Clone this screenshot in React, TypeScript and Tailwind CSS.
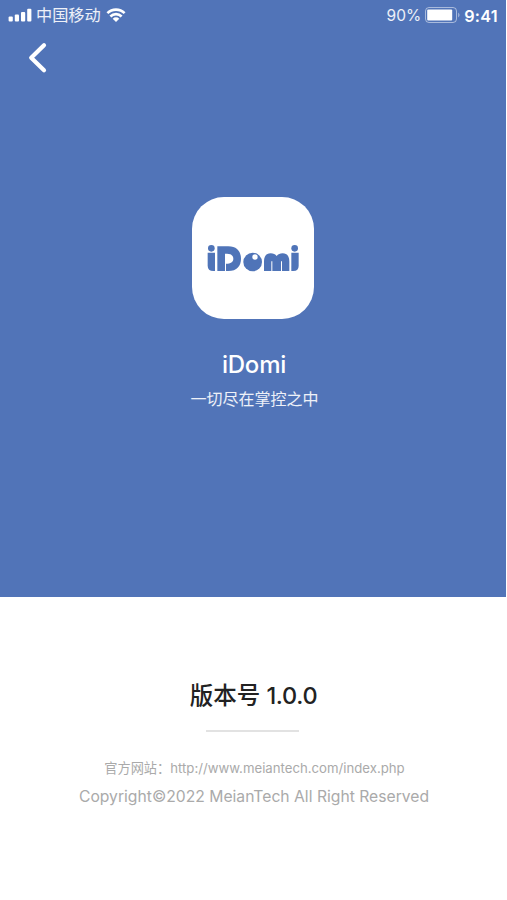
const SignalIcon = () => (
  <svg width="24" height="14" viewBox="0 0 24 14" fill="currentColor">
    <rect x="0.6" y="8.6" width="4.2" height="4.9" rx="1" />
    <rect x="6.8" y="6.6" width="4.2" height="6.9" rx="1" />
    <rect x="13" y="4" width="4.2" height="9.5" rx="1" />
    <rect x="19.2" y="0.8" width="4.2" height="12.7" rx="1" />
  </svg>
)

const WifiIcon = () => (
  <svg width="20" height="14" viewBox="0 0 20 14" fill="none">
    <path
      d="M1.4 5.2a12.2 12.2 0 0 1 17.2 0M4.4 8.5a7.9 7.9 0 0 1 11.2 0"
      stroke="currentColor"
      strokeWidth="2.6"
    />
    <path d="M6.7 10.7a4.7 4.7 0 0 1 6.6 0L10 13.9z" fill="currentColor" />
  </svg>
)

const BatteryIcon = () => (
  <svg width="36" height="16" viewBox="0 0 36 16" fill="none">
    <rect
      x="0.5"
      y="0.5"
      width="31"
      height="15"
      rx="3.5"
      stroke="currentColor"
      strokeOpacity="0.5"
    />
    <rect x="2.2" y="2.4" width="25" height="11.2" rx="1" fill="currentColor" />
    <path
      d="M33.2 5.6c1.8 1.4 1.8 3.6 0 5z"
      fill="currentColor"
      fillOpacity="0.5"
    />
  </svg>
)

const Logo = () => (
  <svg width="92" height="28" viewBox="66 162 276 84" fill="#4f74b8">
    <circle cx="79" cy="175" r="10" />
    <path d="M68 188h22v55h-5q-17 0-17-16z" />
    <path d="M97 169h33c26 0 38 16 38 37s-12 37-38 37h-7v-22c14 0 22-5 22-15s-8-15-19-15h-6v52H97z" />
    <circle cx="203" cy="216" r="28" />
    <circle cx="210" cy="201" r="8" fill="#fff" />
    <path d="M237 243v-29c0-16 7-24 20-24 8 0 14 3 18 8 4-5 10-8 18-8 13 0 20 8 20 24v29h-22v-29h-3v29h-26v-29h-3v29z" />
    <circle cx="329" cy="175" r="10" />
    <path d="M319 188h22v39q0 16-16 16h-6z" />
  </svg>
)

const StatusBar = () => (
  <div className="flex h-[30px] items-center justify-between px-2">
    <div className="flex items-center">
      <SignalIcon />
      <span className="ml-[4px] text-[16.2px] leading-[28px] text-white/90">
        中国移动
      </span>
      <span className="ml-[5px]">
        <WifiIcon />
      </span>
    </div>
    <div className="flex items-center">
      <span className="pt-[2px] text-[15.5px] text-white/90">90%</span>
      <span className="ml-[4px]">
        <BatteryIcon />
      </span>
      <span className="ml-[3px] pt-[2px] text-[16.2px] font-semibold tracking-[0.3px]">
        9:41
      </span>
    </div>
  </div>
)

export default function App() {
  return (
    <div className="h-[900px] w-[507px] overflow-hidden bg-white font-['Inter','Noto_Sans_CJK_SC',sans-serif]">
      <header className="flex h-[597px] w-[506px] flex-col bg-[#5174b8] text-white">
        <StatusBar />
        <button
          type="button"
          aria-label="Back"
          className="mt-[12px] ml-[28px] h-[32px] w-[20px]"
        >
          <svg width="20" height="32" viewBox="0 0 20 32" fill="none">
            <path
              d="M16 3.2 3.2 15.8 16 28.3"
              stroke="currentColor"
              strokeWidth="4.2"
              strokeLinecap="round"
              strokeLinejoin="round"
            />
          </svg>
        </button>
        <div className="mt-[123px] flex flex-col items-center">
          <div className="flex h-[122px] w-[122px] items-center justify-center rounded-[32px] bg-white pr-[1px]">
            <Logo />
          </div>
          <h1 className="mt-[30px] pl-[2px] text-[24px] leading-[32px] font-medium tracking-[-0.2px]">
            iDomi
          </h1>
          <p className="mt-[6px] pl-[3px] text-[16px] leading-[24px] text-white/90">
            一切尽在掌控之中
          </p>
        </div>
      </header>
      <footer className="flex flex-col items-center pt-[81px]">
        <h2 className="text-[23.5px] leading-[36px] font-medium text-[#222]">
          版本号 <span className="tracking-[-0.3px]">1.0.0</span>
        </h2>
        <div className="mt-[16px] mr-[2px] h-[2px] w-[93px] bg-[#e2e2e2]" />
        <p className="mt-[25px] pl-[2px] text-[13.2px] leading-[22px] whitespace-nowrap text-[#aaa]">
          官方网站：http://www.meiantech.com/index.php
        </p>
        <p className="mt-[7px] pl-[1px] text-[15.7px] leading-[22px] whitespace-nowrap text-[#aaa]">
          Copyright©2022 MeianTech All Right Reserved
        </p>
      </footer>
    </div>
  )
}
